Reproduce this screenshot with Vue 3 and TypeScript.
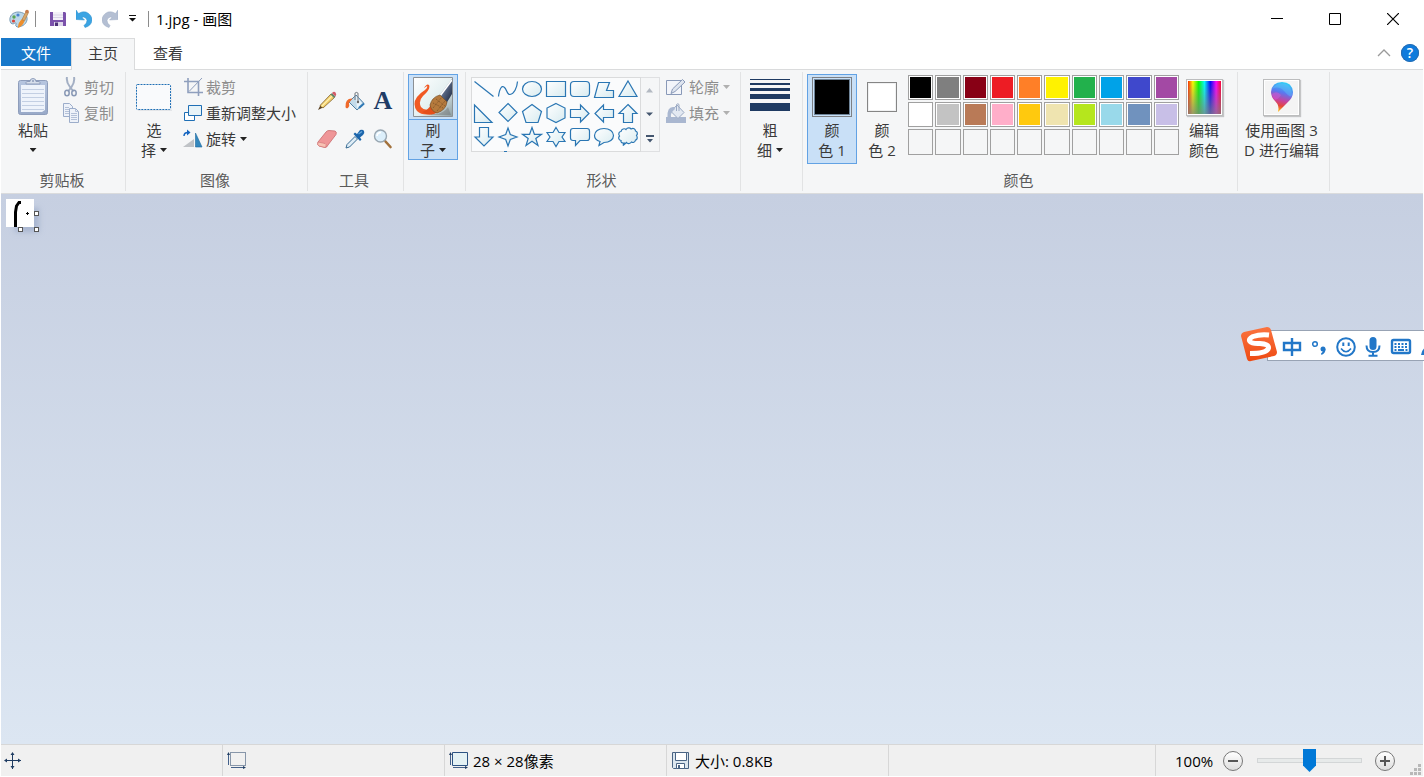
<script setup lang="ts">
import { ref } from 'vue'

const zoom = ref(50)

const shapes: { name: string; d: string }[] = [
  { name: '直线', d: 'M2.5 3.5L21.5 18.5' },
  { name: '曲线', d: 'M2.5 18.5C3.5 10 6 7.5 8 9C11 11 11 17 14 16.5C18 16 21 10 21.5 3.5' },
  { name: '椭圆形', d: 'M2.5 11a9.5 7.5 0 1 0 19 0a9.5 7.5 0 1 0 -19 0z' },
  { name: '矩形', d: 'M2.5 3.5h19v15h-19z' },
  { name: '圆角矩形', d: 'M6 3.5h12q3.5 0 3.5 3.5v8q0 3.5 -3.5 3.5h-12q-3.5 0 -3.5 -3.5v-8q0 -3.5 3.5 -3.5z' },
  { name: '多边形', d: 'M2.5 19.5L6.5 4.5H17.5L14.5 12.5H21.5V19.5z' },
  { name: '三角形', d: 'M12 3L21 18.5H3z' },
  { name: '直角三角形', d: 'M2.5 3V20.5H20z' },
  { name: '菱形', d: 'M12 1.5L21 10.5L12 19.5L3 10.5z' },
  { name: '五边形', d: 'M12 2.5L21.5 9.5L18 20.5H6L2.5 9.5z' },
  { name: '六边形', d: 'M12 1.5L21 6V16L12 20.5L3 16V6z' },
  { name: '右箭头', d: 'M2.5 7.5H12.5V3L21 11.5L12.5 20V15.5H2.5z' },
  { name: '左箭头', d: 'M21.5 7.5H11.5V3L3 11.5L11.5 20V15.5H21.5z' },
  { name: '上箭头', d: 'M12 2.5L21 11.5H16.5V20.5H7.5V11.5H3z' },
  { name: '下箭头', d: 'M7.5 1.5H16.5V11H21L12 20L3 11H7.5z' },
  { name: '四角星', d: 'M12 2L14.3 8.5L21 11L14.3 13.5L12 20L9.7 13.5L3 11L9.7 8.5z' },
  { name: '五角星', d: 'M12 1.5L14.4 8.3H21.5L15.8 12.4L18 19.5L12 15.3L6 19.5L8.2 12.4L2.5 8.3H9.6z' },
  { name: '六角星', d: 'M12 1.5L15 6.5H21L18 11L21 15.5H15L12 20.5L9 15.5H3L6 11L3 6.5H9z' },
  { name: '圆角矩形标注', d: 'M5 2.5H19Q21.5 2.5 21.5 5V12Q21.5 14.5 19 14.5H12L7.5 19.5V14.5H5Q2.5 14.5 2.5 12V5Q2.5 2.5 5 2.5z' },
  { name: '椭圆形标注', d: 'M7 19.5L8 15.5C4.5 14.5 2.5 12 2.5 9.5C2.5 5.5 6.5 2.5 12 2.5S21.5 5.5 21.5 9.5S17.5 16.5 12 16.5z' },
  { name: '云形标注', d: 'M7 19.5L8 17C6 17.5 4.5 16 5 14.5C2.5 14 2 11.5 3.5 10C2 8 3 5.5 5 5.5C5.5 3 8.5 2 10 3.5C11.5 1.5 14 1.5 15 3C17.5 1.5 19.5 3 19.5 5C21.5 5.5 22 8 20.5 9.5C22 11.5 21 14 19.5 14C19 16.5 17 17 15.5 16C14 18 11.5 18 10.5 16.5z' },
]

const palette: string[] = [
  '#000000', '#7f7f7f', '#880015', '#ed1c24', '#ff7f27', '#fff200', '#22b14c', '#00a2e8', '#3f48cc', '#a349a4',
  '#ffffff', '#c3c3c3', '#b97a57', '#ffaec9', '#ffc90e', '#efe4b0', '#b5e61d', '#99d9ea', '#7092be', '#c8bfe7',
  '', '', '', '', '', '', '', '', '', '',
]
</script>

<template>
  <div class="window">
    <header class="titlebar">
      <svg class="app-icon" width="20" height="20" viewBox="0 0 20 20">
        <path d="M1 12C0 7 4 3 9 3S19 6 18 11S12 18 8 18Q6 17 7 15T4 15Q1.5 15 1 12z" fill="#bcd7e8" stroke="#7b9db5" />
        <circle cx="5" cy="8" r="1.7" fill="#5aa653" /><circle cx="9" cy="6" r="1.6" fill="#4b83d0" />
        <circle cx="4.5" cy="12" r="1.6" fill="#d9463b" /><circle cx="12.5" cy="13" r="2" fill="#f6f9fb" />
        <path d="M9 19Q9 13 13 10L15.5 12Q14 17 9 19z" fill="#ed8f2d" />
        <path d="M13 10.500L17 2.500L19.500 3.500L15.500 12z" fill="#d9a86b" stroke="#a8733b" stroke-width=".6" />
        <circle cx="18" cy="2.500" r="1.800" fill="#c77c4d" />
      </svg>
      <span class="bar-sep"></span>
      <button class="quick" aria-label="保存">
        <svg width="16" height="16" viewBox="0 0 16 16">
          <path d="M0 1h15l1 1v13H0z" fill="#7b52ab" /><path d="M3 1h10v8H3z" fill="#f3f1f8" />
          <path d="M3 4h10M3 6.5h10" stroke="#d8d3e6" /><path d="M4 11h9v4H4z" fill="#ddd6ea" />
          <path d="M5 11.5h3v3.5H5z" fill="#4d3277" />
        </svg>
      </button>
      <button class="quick" aria-label="撤消">
        <svg width="16" height="18" viewBox="0 0 16 18">
          <path d="M0 0L2.5 3.500Q6 1 10 2Q16 4.500 16 10.500Q15 16 9 17.500L8 15.500Q11 13.500 11 10.500Q10.500 7.500 7.500 7L6 7.500L8.500 10L0 9.500z" fill="#3ba4e3" stroke="#2f8ecb" stroke-width=".5" />
        </svg>
      </button>
      <button class="quick" aria-label="重做">
        <svg width="16" height="18" viewBox="0 0 16 18">
          <path d="M16 0L13.500 3.500Q10 1 6 2Q0 4.500 0 10.500Q1 16 7 17.500L8 15.500Q5 13.500 5 10.500Q5.500 7.500 8.500 7L10 7.500L7.500 10L16 9.500z" fill="#b4bfd3" stroke="#9fadc5" stroke-width=".5" />
        </svg>
      </button>
      <button class="quick small" aria-label="自定义快速访问工具栏">
        <svg width="8" height="8" viewBox="0 0 8 8"><path d="M0 0h7v1H0zM0 3h7L3.5 6.5z" fill="#111" /></svg>
      </button>
      <span class="bar-sep title-sep"></span>
      <span class="title">1.jpg - 画图</span>
      <div class="controls">
        <button aria-label="最小化"><svg width="12" height="12"><path d="M0 5.5h12" stroke="#000" /></svg></button>
        <button aria-label="最大化"><svg width="12" height="12"><path d="M.5 .5h11v11H.5z" fill="none" stroke="#000" /></svg></button>
        <button aria-label="关闭"><svg width="12" height="12"><path d="M0 0L12 12M12 0L0 12" stroke="#000" stroke-width="1.2" /></svg></button>
      </div>
    </header>

    <nav class="tabs">
      <button class="tab file">文件</button>
      <button class="tab active">主页</button>
      <button class="tab">查看</button>
      <div class="tab-tools">
        <button aria-label="折叠功能区"><svg width="14" height="8"><path d="M1 7L7 1L13 7" fill="none" stroke="#9a9a9a" stroke-width="1.3" /></svg></button>
        <button class="help" aria-label="帮助">?</button>
      </div>
    </nav>

    <main class="ribbon">
      <section class="group g-clip">
        <div class="body">
          <button class="big paste">
            <span class="pic">
              <svg width="32" height="38" viewBox="0 0 32 38">
                <defs><linearGradient id="cb" x2="0" y2="1"><stop stop-color="#b7c6e0" /><stop offset="1" stop-color="#98a9c8" /></linearGradient></defs>
                <rect x="1.5" y="2.500" width="29" height="34" rx="2" fill="url(#cb)" stroke="#8e9dbb" />
                <path d="M4 7h24v25l-3 2H4z" fill="#eef3fb" />
                <path d="M5 11.5h22M5 15.5h22M5 19.5h22M5 23.5h22M5 27.5h22M5 31.5h22" stroke="#c3cfe3" />
                <path d="M9 6V4.500q0-1 2-1h2q0-3 3-3t3 3h2q2 0 2 1V6z" fill="#d7dfec" stroke="#8e9dbb" />
                <circle cx="16" cy="3" r="1" fill="#8e9dbb" />
              </svg>
            </span>
            <span>粘贴</span><span class="line"><i class="arrow"></i></span>
          </button>
          <div class="rows">
            <button class="row" disabled>
              <svg width="18" height="20" viewBox="0 0 18 20">
                <path d="M5 0Q4 5 8 10L11.500 14.500M12 0Q13 5 9.500 10L6 14.500" fill="none" stroke="#a3afc4" stroke-width="2" />
                <ellipse cx="5" cy="16" rx="2.200" ry="2.800" fill="none" stroke="#8898b5" stroke-width="1.500" />
                <ellipse cx="12" cy="16" rx="2.200" ry="2.800" fill="none" stroke="#8898b5" stroke-width="1.500" />
              </svg>剪切
            </button>
            <button class="row" disabled>
              <svg width="18" height="20" viewBox="0 0 18 20">
                <path d="M1.5 .5h6l3 3v10h-9z" fill="#eef2f9" stroke="#9cadca" /><path d="M3 4.5h4M3 6.5h4M3 8.5h4M3 10.5h4" stroke="#b4c1d8" />
                <path d="M7.5 5.5h6l3 3v11h-9z" fill="#eef2f9" stroke="#9cadca" /><path d="M13.5 5.5v3h3M9 10.5h6M9 12.5h6M9 14.5h6M9 16.5h6" fill="none" stroke="#b4c1d8" />
              </svg>复制
            </button>
          </div>
        </div>
        <div class="label">剪贴板</div>
      </section>

      <section class="group g-image">
        <div class="body">
          <button class="big">
            <span class="pic"><svg width="36" height="28" viewBox="0 0 36 28"><path d="M2 27.500h34V3" fill="none" stroke="#e3e5e8" /><rect x=".5" y="1.500" width="34" height="25" rx="1" fill="#f9fafc" stroke="#1f6fb5" stroke-dasharray="2 1" /></svg></span>
            <span>选</span><span class="line">择<i class="arrow"></i></span>
          </button>
          <div class="rows">
            <button class="row" disabled>
              <svg width="20" height="20" viewBox="0 0 20 20">
                <path d="M5 1V15.5H20M1 4.5H15.5V19" fill="none" stroke="#8f9fbd" stroke-width="1.600" /><path d="M6 14.5L19 1" stroke="#8f9fbd" />
              </svg>裁剪
            </button>
            <button class="row">
              <svg width="20" height="18" viewBox="0 0 20 18">
                <path d="M1.5 8.500h10v8h-10z" fill="#fff" stroke="#1f6fb5" /><path d="M5.500 1.500h13v10h-13z" fill="#e7f3f8" stroke="#1f6fb5" />
              </svg>重新调整大小
            </button>
            <button class="row">
              <svg width="20" height="20" viewBox="0 0 20 20">
                <path d="M11 10V18H0z" fill="#bfc2c6" /><path d="M12.5 4V18H19z" fill="#3387bd" stroke="#1e6a9f" stroke-width=".6" />
                <path d="M1 7Q1 3.500 5 3.500" fill="none" stroke="#1464c0" stroke-width="1.500" /><path d="M4 .5L7.500 3.500L4 6.500z" fill="#1464c0" />
              </svg>旋转<i class="arrow"></i>
            </button>
          </div>
        </div>
        <div class="label">图像</div>
      </section>

      <section class="group g-tools">
        <div class="body">
          <div class="tools">
            <button aria-label="铅笔">
              <svg width="20" height="20" viewBox="0 0 20 20">
                <path d="M1 19L3.5 14L6 16.5z" fill="#5a4021" /><path d="M3 14.5L14 3L17.5 6.5L6 17z" fill="#f2ce6b" stroke="#80622f" stroke-width=".8" />
                <path d="M4.5 15.5L15.5 4.5" stroke="#fff0b0" stroke-width="1.2" />
                <path d="M13.5 3.5L15 2L18.500 5.500L17 7z" fill="#62856c" /><path d="M15 2Q17 0 18.500 1.500T18.500 5.500z" fill="#d45b68" />
              </svg>
            </button>
            <button aria-label="用颜色填充">
              <svg width="20" height="20" viewBox="0 0 20 20">
                <path d="M11 4L19 12.5L12 19L4 11z" fill="#c3dbea" stroke="#4e7fa5" /><path d="M11 5L17 12L12 17.5z" fill="#e9f3fa" /><path d="M14 17L19 12.5" stroke="#2f79b5" stroke-width="2" />
                <path d="M10 9V2.5Q11.5 0 13 2.500V11" fill="none" stroke="#858a90" stroke-width="1.200" /><circle cx="13" cy="11" r="1.200" fill="#666" />
                <path d="M7.500 7.500Q0 7 .5 16Q1 18 3 17Q5 15 4 12z" fill="#ef6a2b" />
              </svg>
            </button>
            <button aria-label="文本" class="letter">A</button>
            <button aria-label="橡皮擦">
              <svg width="22" height="20" viewBox="0 0 22 20">
                <path d="M2 13L10 3Q11 1.5 13 1.500L19 2Q21 2.500 20 5.500L12 16Q11 18.500 9 18.500L3 17Q1 16 2 13z" fill="#ef9698" stroke="#c8696d" stroke-width=".8" />
                <path d="M2 13L9 14.5Q11 15 9.5 18.500L3 17Q1 16 2 13z" fill="#f8c2b4" stroke="#c8696d" stroke-width=".5" />
              </svg>
            </button>
            <button aria-label="颜色选取器">
              <svg width="20" height="20" viewBox="0 0 20 20">
                <path d="M1 19L2 15.500L10 7.500L12.500 10L4.500 18z" fill="#dfedf6" stroke="#376b93" />
                <path d="M8.500 5L10 3.500L12 5L15 1Q18 0 19 2T18 6L15 8.500L16.500 10.500L15 12z" fill="#1c66ac" /><path d="M13.500 5L17 2.500" stroke="#68a8dd" stroke-width="1.300" />
              </svg>
            </button>
            <button aria-label="放大镜">
              <svg width="20" height="20" viewBox="0 0 20 20">
                <path d="M12.500 12.500L17.500 18" stroke="#a2713b" stroke-width="2.600" stroke-linecap="round" /><circle cx="7.500" cy="7" r="6" fill="#dceffb" stroke="#98a6b1" stroke-width="1.400" />
                <path d="M4 7Q4.500 3.500 8 3.500" stroke="#fff" stroke-width="1.500" fill="none" />
              </svg>
            </button>
          </div>
        </div>
        <div class="label">工具</div>
      </section>

      <section class="group g-brush">
        <div class="body">
          <button class="big selected split">
            <span class="pic">
              <svg width="40" height="40" viewBox="0 0 40 40">
                <defs>
                  <linearGradient id="bb" x2="1" y2="1"><stop stop-color="#fff" /><stop offset=".55" stop-color="#e4f0f1" /><stop offset="1" stop-color="#8d9da1" /></linearGradient>
                  <linearGradient id="bh" x2="1" y2="1"><stop stop-color="#b8c4d4" /><stop offset=".5" stop-color="#54637f" /><stop offset="1" stop-color="#151f36" /></linearGradient>
                </defs>
                <path d="M.5 .5h39v39H.5z" fill="url(#bb)" />
                <path d="M18 37Q30 38 35 30L38 38H18z" fill="#666" opacity=".4" />
                <path d="M26 19L39 2V17L33 27z" fill="url(#bh)" /><path d="M27 19L39 3" stroke="#fff" stroke-width="1.500" />
                <path d="M11 11Q14 6 16 8Q18 12 10 19Q5 24 8 30Q11 34 18 32L20 37Q9 39 4 34Q-1 27 4 20Q7 16 12 13Q15 10 14 9z" fill="#f15a24" />
                <path d="M9 35Q16 33 18 27L25 35Q17 40 9 35z" fill="#e44f1b" />
                <path d="M17 28Q19 20 27 18L34 25Q33 33 24 36Q18 34 17 28z" fill="#b57a3d" stroke="#795026" stroke-width=".7" />
                <path d="M20 26L30 31M23 22L32 29M20 31L29 20M24 34L32 24" stroke="#815528" stroke-dasharray="1 1" />
                <path d="M.5 .5h39v39H.5z" fill="none" stroke="#8c9094" />
              </svg>
            </span>
            <span>刷</span><span class="line">子<i class="arrow"></i></span>
          </button>
        </div>
      </section>

      <section class="group g-shapes">
        <div class="body">
          <div class="gallery">
            <svg class="defs" width="0" height="0"><defs><linearGradient id="shape-fill" x2="1" y2="1"><stop stop-color="#fff" /><stop offset="1" stop-color="#d8ebf0" /></linearGradient></defs></svg>
            <button v-for="(s, i) in shapes" :key="s.name" :aria-label="s.name">
              <svg width="24" height="24" viewBox="0 0 24 24"><path :d="s.d" :fill="i < 2 ? 'none' : 'url(#shape-fill)'" stroke="#2a76b3" stroke-width="1.200" /></svg>
            </button>
          </div>
          <div class="scroller">
            <button disabled aria-label="上一行"><svg width="8" height="5"><path d="M0 4.5L3.5 0L7 4.5z" fill="#b3b9c2" /></svg></button>
            <button aria-label="下一行"><svg width="8" height="5"><path d="M0 .5h7L3.5 4z" fill="#44566f" /></svg></button>
            <button aria-label="更多形状"><svg width="8" height="8"><path d="M0 0h8v2H0zM1 4h6L4 7.5z" fill="#44566f" /></svg></button>
          </div>
          <div class="rows">
            <button class="row" disabled>
              <svg width="20" height="18" viewBox="0 0 20 18"><path d="M.5 2.5h15v14H.5z" fill="#f3f5fa" stroke="#8999b8" /><path d="M5 15.5L6.5 11L16.5 1.5L19 4L9 13.5z" fill="#dfe5ef" stroke="#8999b8" /></svg>轮廓<i class="arrow"></i>
            </button>
            <button class="row" disabled>
              <svg width="20" height="20" viewBox="0 0 20 20">
                <path d="M0 14h20v6H0z" fill="#a9b7d0" /><path d="M11 2L18 9.5L12 15.5L5 8.5z" fill="#e3e9f2" stroke="#9aa9c3" /><path d="M10.5 8V1.5Q12 0 13 1.5V8" fill="none" stroke="#9aa9c3" />
                <path d="M8 4Q1 3 1.5 14H5Q4 10 9 6z" fill="#a9b7d0" />
              </svg>填充<i class="arrow"></i>
            </button>
          </div>
        </div>
        <div class="label">形状</div>
      </section>

      <section class="group g-size">
        <div class="body">
          <button class="big">
            <span class="pic"><svg width="40" height="36" viewBox="0 0 40 36"><path d="M0 0h40v1H0zM0 4h40v2H0zM0 9h40v3H0zM0 15h40v5H0zM0 24h40v8H0z" fill="#1e3a62" /></svg></span>
            <span>粗</span><span class="line">细<i class="arrow"></i></span>
          </button>
        </div>
      </section>

      <section class="group g-colors">
        <div class="body">
          <button class="big selected tall"><span class="pic"><span class="swatch one"></span></span><span>颜</span><span>色 1</span></button>
          <button class="big"><span class="pic"><span class="swatch two"></span></span><span>颜</span><span>色 2</span></button>
          <div class="palette">
            <button v-for="(c, i) in palette" :key="i" :class="{ empty: !c }" :aria-label="c || '自定义颜色'" :style="c ? { backgroundColor: c } : undefined"></button>
          </div>
          <button class="big"><span class="pic"><span class="frame rainbow"></span></span><span>编辑</span><span>颜色</span></button>
        </div>
        <div class="label">颜色</div>
      </section>

      <section class="group g-3d">
        <div class="body">
          <button class="big wide">
            <span class="pic"><span class="frame">
              <svg width="26" height="32" viewBox="0 0 26 32">
                <defs>
                  <linearGradient id="p3" x1=".6" x2=".4" y2="1"><stop stop-color="#2fd2f7" /><stop offset=".35" stop-color="#5a78f0" /><stop offset=".62" stop-color="#c7439f" /><stop offset=".8" stop-color="#e4483c" /><stop offset="1" stop-color="#ffc20e" /></linearGradient>
                </defs>
                <path d="M9 31Q11 25 6 20Q2 16 2 11Q3 1 13 1T24 11Q24 17 18 22Q13 27 9 31z" fill="url(#p3)" />
                <path d="M3 8Q10 4 16 11T23 14Q23 6 17 3Q8 1 3 8z" fill="#65c6fb" opacity=".4" />
                <path d="M3 13Q8 9 12 14Q10 18 6 19Q3 16 3 13z" fill="#d657d8" opacity=".5" />
              </svg>
            </span></span>
            <span>使用画图 3</span><span>D 进行编辑</span>
          </button>
        </div>
      </section>
    </main>

    <div class="workspace">
      <div class="sheet">
        <svg width="28" height="28" viewBox="0 0 28 28"><path d="M15 3.500H13L10.500 7L9.500 13V28" fill="none" stroke="#000" stroke-width="3" /><path d="M20 14.500h3M21.500 13v3" stroke="#000" /></svg>
        <i class="handle east"></i><i class="handle south"></i><i class="handle corner"></i>
      </div>
    </div>

    <footer class="status">
      <div class="cell pos">
        <svg width="18" height="18" viewBox="0 0 18 18"><path d="M1 8.500h16M8.500 1v16" stroke="#1f3c62" /><path d="M0 8.500l3-2v4zM17 8.500l-3-2v4zM8.500 0l-2 3h4zM8.500 17l-2-3h4z" fill="#1f3c62" /></svg>
      </div>
      <div class="cell">
        <svg width="20" height="18" viewBox="0 0 20 18"><path d="M3.500 .500h15v13h-15z" fill="none" stroke="#1f3c62" stroke-dasharray="1 1" /><path d="M1.500 1v12M4 15.500h14" stroke="#44618a" /><path d="M1.500 0l-1.500 3h3zM19 15.500l-3-1.500v3z" fill="#1f3c62" /></svg>
      </div>
      <div class="cell">
        <svg width="20" height="18" viewBox="0 0 20 18"><path d="M3.500 .500h15v13h-15z" fill="#e4f1f4" stroke="#2c5282" /><path d="M1.500 1v12M4 15.500h14" stroke="#44618a" /><path d="M1.500 0l-1.500 3h3zM19 15.500l-3-1.500v3z" fill="#1f3c62" /></svg>
        <span>28 × 28像素</span>
      </div>
      <div class="cell">
        <svg width="20" height="18" viewBox="0 0 20 18"><path d="M1.500 .5h16v16h-15l-1-1z" fill="#dce6ee" stroke="#4a6484" /><path d="M4.500 .5h11v8h-11z" fill="#fff" stroke="#4a6484" /><path d="M5.500 11.500h8v5h-8z" fill="#fff" stroke="#4a6484" /><path d="M7 13h2v3h-2z" fill="#4a6484" /></svg>
        <span>大小: 0.8KB</span>
      </div>
      <div class="zoom">
        <label for="zoom-range">100%</label>
        <button class="round" aria-label="缩小"><svg width="10" height="10"><path d="M0 5h10" stroke="#555" stroke-width="2" /></svg></button>
        <input id="zoom-range" v-model="zoom" type="range" min="0" max="100" />
        <button class="round" aria-label="放大"><svg width="10" height="10"><path d="M0 5h10M5 0v10" stroke="#555" stroke-width="2" /></svg></button>
        <svg class="grip" width="11" height="11" viewBox="0 0 11 11"><path d="M8 0h3v3H8zM8 4h3v3H8zM4 4h3v3H4zM8 8h3v3H8zM4 8h3v3H4zM0 8h3v3H0z" fill="#b8b8b8" /></svg>
      </div>
    </footer>

    <aside class="ime">
      <svg class="logo" width="36" height="36" viewBox="0 0 36 36">
        <defs><linearGradient id="sg" x2="0" y2="1"><stop stop-color="#fb7440" /><stop offset="1" stop-color="#ee4a12" /></linearGradient></defs>
        <path d="M3 5L26 0Q29 0 30 3L36 25Q36 28 33 29L10 34Q7 35 6 32L0 9Q0 6 3 5z" fill="url(#sg)" />
        <path d="M28 8Q19 7 12 9.500Q7 12 9 14.500Q11 17 19 16.500Q28 17 27.500 21Q26 26.500 9 26.500" fill="none" stroke="#fff" stroke-width="5" />
      </svg>
      <div class="ime-bar">
        <button aria-label="中文"><svg width="20" height="20" viewBox="0 0 20 20"><path d="M2 6h16v7H2zM10 1v18" fill="none" stroke="#2277c8" stroke-width="2.400" /></svg></button>
        <button aria-label="标点"><svg width="16" height="20" viewBox="0 0 16 20"><circle cx="4" cy="7" r="2.300" fill="none" stroke="#2277c8" stroke-width="1.500" /><circle cx="12" cy="12" r="2.500" fill="#2277c8" /><path d="M14.500 12Q14.500 16.500 10.500 18L10 16.500Q12 15.500 12 12.500z" fill="#2277c8" /></svg></button>
        <button aria-label="表情"><svg width="20" height="20" viewBox="0 0 20 20"><circle cx="10" cy="10" r="8.800" fill="none" stroke="#2277c8" stroke-width="2" /><path d="M7.300 5.500v3.500M12.700 5.500v3.500" stroke="#2277c8" stroke-width="2" /><path d="M5 11.500Q10 18 15 11.500" fill="none" stroke="#2277c8" stroke-width="1.600" /></svg></button>
        <button aria-label="语音"><svg width="16" height="20" viewBox="0 0 16 20"><rect x="4.500" y="0" width="7" height="13" rx="3.500" fill="#2277c8" /><path d="M1.500 8.500Q1.500 15 8 15T14.500 8.500M8 15v4M3.500 18.800h9" fill="none" stroke="#2277c8" stroke-width="2" /></svg></button>
        <button aria-label="软键盘"><svg width="22" height="20" viewBox="0 0 22 20"><rect x="2" y="3" width="18" height="13" rx="1.500" fill="none" stroke="#2277c8" stroke-width="2.400" /><path d="M4.500 7h13M4.500 10h13" stroke="#2277c8" stroke-width="2" stroke-dasharray="2 1.500" /><path d="M4.500 13h2M8 13h6M15.500 13h2" stroke="#2277c8" stroke-width="2" /></svg></button>
        <button aria-label="登录"><svg width="20" height="20" viewBox="0 0 20 20"><circle cx="10" cy="6" r="4.500" fill="#2277c8" /><path d="M0 18Q1 11 6 10H14Q19 11 20 18z" fill="#2277c8" /></svg></button>
      </div>
    </aside>
  </div>
</template>

<style>
body {
  margin: 0;
}
</style>

<style scoped>
.window {
  position: relative;
  display: flex;
  flex-direction: column;
  min-height: 100vh;
  padding: 0 1px 1px;
  box-sizing: border-box;
  overflow: hidden;
  background: #fff;
  color: #3a3a3a;
  font-family: "Open Sans", "Noto Sans CJK SC", sans-serif;
  font-size: 15px;
  line-height: 20px;
}
button {
  margin: 0;
  padding: 0;
  border: 0;
  background: none;
  color: inherit;
  font: inherit;
}
svg {
  display: block;
  flex: none;
}
.titlebar {
  display: flex;
  align-items: center;
  height: 38px;
  padding-left: 8px;
}
.bar-sep {
  width: 1px;
  height: 16px;
  margin: 0 9px 0 6px;
  background: #8c8c8c;
}
.quick {
  display: grid;
  place-items: center;
  width: 26px;
}
.quick.small {
  width: 20px;
}
.title-sep {
  margin: 0 7px 0 5px;
}
.title {
  color: #000;
}
.controls {
  display: flex;
  margin-right: 1px;
  margin-left: auto;
}
.controls button {
  display: grid;
  place-items: center;
  width: 58px;
  height: 38px;
}
.tabs {
  display: flex;
  height: 32px;
}
.tab {
  width: 66px;
  height: 32px;
  padding-bottom: 2px;
  border-bottom: 1px solid #dadbdc;
}
.tab.file {
  width: 70px;
  background: linear-gradient(#1979ca 28px, #fff 28px);
  color: #fff;
}
.tab.active {
  width: 64px;
  padding-bottom: 3px;
  border: 1px solid #dadbdc;
  border-bottom: 0;
  background: #f5f6f7;
}
.tab-tools {
  display: flex;
  flex: 1;
  align-items: center;
  justify-content: flex-end;
  gap: 10px;
  padding: 0 4px 2px 0;
  border-bottom: 1px solid #dadbdc;
}
.help {
  width: 18px;
  height: 18px;
  border-radius: 50%;
  background: #0f7bdc;
  box-shadow: inset 0 0 0 1px #2a6db0;
  color: #fff;
  font-size: 14px;
  font-weight: 600;
  line-height: 18px;
}
.ribbon {
  display: flex;
  height: 123px;
  border-bottom: 1px solid #dadbdc;
  background: #f5f6f7;
}
.group {
  display: flex;
  flex: none;
  flex-direction: column;
  box-sizing: border-box;
  height: 119px;
  margin-top: 2px;
  border-right: 1px solid #e2e3e4;
}
.body {
  display: flex;
  align-items: flex-start;
  height: 98px;
  padding-top: 2px;
  box-sizing: border-box;
}
.label {
  padding-right: 3px;
  color: #5a5a5a;
  text-align: center;
}
.g-clip {
  width: 125px;
  padding-left: 1px;
}
.g-clip .body {
  gap: 4px;
  padding-left: 4px;
}
.g-image {
  width: 182px;
}
.g-image .body {
  gap: 4px;
  padding-left: 3px;
}
.g-image .row {
  gap: 3px;
}
.g-tools {
  width: 96px;
}
.g-brush {
  width: 62px;
}
.g-brush .body,
.g-colors .body,
.g-3d .body {
  padding-left: 4px;
}
.g-shapes {
  width: 275px;
}
.g-shapes .body {
  padding-left: 5px;
}
.g-shapes .rows {
  padding-left: 6px;
}
.g-shapes .row {
  gap: 3px;
}
.g-size {
  width: 62px;
}
.g-size .body {
  padding-left: 4px;
}
.g-colors {
  width: 435px;
}
.g-3d {
  width: 92px;
}
.big {
  display: flex;
  flex-direction: column;
  align-items: center;
  width: 50px;
  height: 86px;
  box-sizing: border-box;
}
.big.paste {
  width: 54px;
  margin-right: -2px;
}
.big.wide {
  width: 79px;
}
.big.tall {
  height: 90px;
}
.pic {
  display: grid;
  flex: none;
  place-items: center;
  width: 100%;
  height: 46px;
}
.line {
  display: flex;
  align-items: center;
  justify-content: center;
  gap: 4px;
  height: 20px;
}
.arrow {
  width: 7px;
  height: 4px;
  margin-left: 1px;
  background: #222;
  clip-path: polygon(0 0, 100% 0, 50% 100%);
}
.big .arrow {
  margin-left: 0;
}
.selected {
  background: #c9e0f7;
  box-shadow: inset 0 0 0 1px #62a2e4;
}
.split .pic {
  box-sizing: border-box;
  border-bottom: 1px solid #62a2e4;
}
.rows {
  display: flex;
  flex-direction: column;
}
.row {
  display: flex;
  align-items: center;
  gap: 4px;
  height: 26px;
  white-space: nowrap;
}
.row:disabled {
  color: #8d8d8d;
}
.row:disabled .arrow {
  background: #b0b0b0;
}
.tools {
  display: grid;
  grid-template-columns: repeat(3, 28px);
  grid-auto-rows: 38px;
  padding: 8px 0 0 5px;
}
.tools button {
  display: grid;
  place-items: center;
}
.tools .letter {
  color: #1f3c66;
  font: bold 26px/28px "Liberation Serif", serif;
}
.gallery {
  position: relative;
  display: grid;
  grid-template-columns: repeat(7, 24px);
  grid-auto-rows: 24px;
  margin-top: 3px;
  padding-bottom: 1px;
  border: 1px solid #dadbdc;
  background: #fafbfc;
}
.gallery::after {
  position: absolute;
  bottom: -1px;
  left: 32px;
  width: 3px;
  height: 1px;
  background: #2a76b3;
  content: "";
}
.defs {
  position: absolute;
}
.scroller {
  display: grid;
  grid-template-rows: repeat(3, 1fr);
  width: 18px;
  height: 73px;
  margin-top: 3px;
  border: 1px solid #dfe0e2;
  border-left: 0;
}
.scroller button {
  display: grid;
  place-items: center;
}
.swatch {
  display: block;
  box-sizing: border-box;
  border: 1px solid #858585;
}
.swatch.one {
  width: 40px;
  height: 40px;
  border-color: #7d8084;
  background: #000;
  box-shadow: inset 0 0 0 1px #c9e0f7, inset 0 0 0 2px #6f8498;
}
.swatch.two {
  width: 30px;
  height: 30px;
  background: #fff;
  box-shadow: inset 0 0 0 1px #f0f1f2;
}
.palette {
  display: grid;
  grid-template-columns: repeat(10, 1fr);
  grid-template-rows: 25px 25px 26px;
  gap: 2px;
  width: 271px;
  margin: 1px 0 0 1px;
}
.palette button {
  border: 1px solid #a0a0a0;
  box-shadow: inset 0 0 0 1px #fff;
}
.palette .empty {
  box-shadow: none;
}
.frame {
  display: grid;
  place-items: center;
  box-sizing: border-box;
  width: 37px;
  height: 37px;
  border: 1px solid #bcbdbe;
  background: #f4f4f4;
  box-shadow: inset 0 0 0 1px #fff, 1px 1px 1px #c4c5c6;
}
.rainbow {
  background: linear-gradient(transparent, #808080cc), linear-gradient(90deg, red, yellow, lime, cyan, blue, magenta, red);
}
.workspace {
  flex: 1;
  padding: 5px;
  background: linear-gradient(#c6cfe1, #dce6f2);
}
.sheet {
  position: relative;
  width: 28px;
  height: 28px;
  background: #fff;
  box-shadow: 7px 7px 5px -2px #9aa9c7aa;
}
.handle {
  position: absolute;
  width: 3px;
  height: 3px;
  border: 1px solid #555;
  background: #fff;
}
.east {
  top: 12px;
  left: 28px;
}
.south {
  top: 28px;
  left: 12px;
}
.corner {
  top: 28px;
  left: 28px;
}
.status {
  display: flex;
  height: 31px;
  border-top: 1px solid #d7d7d7;
  background: #f0f0f0;
  color: #000;
}
.cell {
  display: flex;
  align-items: center;
  gap: 4px;
  width: 217px;
  padding-left: 4px;
  border-right: 1px solid #d7d7d7;
}
.cell.pos {
  width: 218px;
  padding-left: 3px;
}
.zoom {
  display: flex;
  align-items: center;
  width: 248px;
  margin-left: auto;
  padding-left: 19px;
  border-left: 1px solid #d7d7d7;
}
.round {
  display: grid;
  place-items: center;
  box-sizing: border-box;
  width: 20px;
  height: 20px;
  border: 1px solid #777;
  border-radius: 50%;
  background: linear-gradient(#fff, #ddd);
}
.zoom label {
  width: 48px;
}
.zoom input {
  width: 105px;
  height: 24px;
  margin: 0 13px 0 14px;
  background: none;
  appearance: none;
}
.zoom input::-webkit-slider-runnable-track {
  box-sizing: border-box;
  height: 5px;
  border: 1px solid #d3d6d7;
  background: #e7eaea;
}
.zoom input::-webkit-slider-thumb {
  width: 13px;
  height: 23px;
  margin-top: -10px;
  background: #0078d7;
  clip-path: polygon(0 0, 100% 0, 100% 72%, 50% 100%, 0 72%);
  appearance: none;
}
.grip {
  align-self: flex-end;
  margin: 0 2px 1px auto;
}
.ime {
  position: absolute;
  top: 327px;
  right: 0;
  display: flex;
  width: 183px;
  height: 35px;
  overflow: hidden;
}
.logo {
  position: absolute;
  z-index: 1;
}
.ime-bar {
  display: flex;
  flex: 1;
  align-items: center;
  gap: 9px;
  box-sizing: border-box;
  height: 31px;
  margin-top: 3px;
  margin-left: 26px;
  padding: 2px 0 0 14px;
  border: 1px solid #98a3b4;
  border-right: 0;
  background: #fff;
}
</style>
